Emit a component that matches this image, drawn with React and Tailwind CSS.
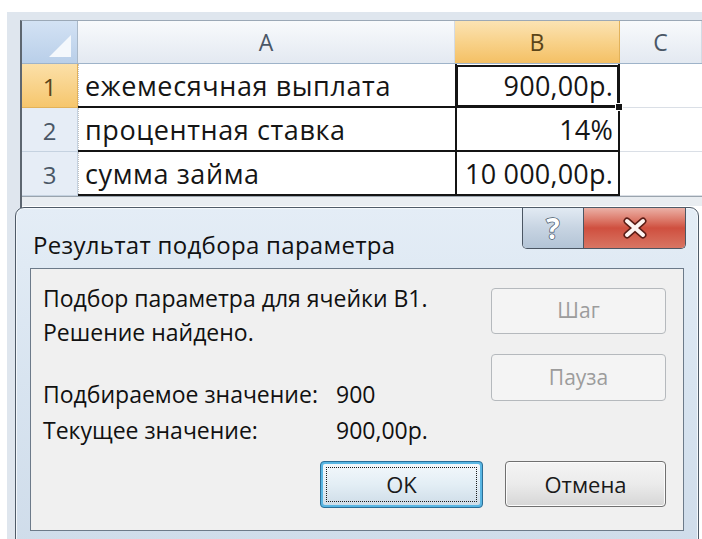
import { useState } from "react";

const cols = [
  { key: "A", width: "w-[377px]" },
  { key: "B", width: "w-[165px]" },
  { key: "C", width: "flex-1" },
];

const rows = [
  { n: "1", label: "ежемесячная выплата", value: "900,00р." },
  { n: "2", label: "процентная ставка", value: "14%" },
  { n: "3", label: "сумма займа", value: "10 000,00р." },
];

function Sheet() {
  return (
    <div className="flex h-full flex-col bg-[#dfe6ee] pl-[13px] pt-[8px]">
      <div className="flex flex-1 flex-col border-l-2 border-t border-l-[#5d6670] border-t-[#9ba8b6] bg-white">
        {/* column headers */}
        <div className="flex h-[43px] border-b border-[#9eb3c9]">
          <div className="relative w-[56px] border-r border-[#a9b8c8] bg-gradient-to-b from-[#d3e2f4] to-[#b9cfe9]">
            <svg className="absolute bottom-[6px] right-[6px]" width="22" height="22" viewBox="0 0 22 22">
              <path d="M22 0 L22 22 L0 22 Z" fill="#f4f8fc" />
            </svg>
          </div>
          {cols.map((c) => (
            <div
              key={c.key}
              className={`${c.width} flex items-center justify-center border-r text-[23px] ${
                c.key === "B"
                  ? "border-[#e2b25a] bg-gradient-to-b from-[#fbe3b3] via-[#f8d28a] to-[#f4c064] text-[#5a4418]"
                  : "border-[#d3dbe5] bg-gradient-to-b from-[#f8fafc] to-[#e3e9f1] text-[#4a5766]"
              }`}
            >
              {c.key}
            </div>
          ))}
        </div>

        {/* data rows */}
        {rows.map((r, i) => (
          <div key={r.n} className="flex h-[44px]">
            <div
              className={`flex w-[56px] items-center justify-center border-b border-r pt-[2px] text-[24px] ${
                i === 0
                  ? "border-[#e2b25a] bg-gradient-to-b from-[#fbe0a8] to-[#f6c66c] text-[#5a4418]"
                  : "border-[#c5d2e0] bg-[#e6edf6] text-[#4a5766]"
              }`}
            >
              {r.n}
            </div>
            <div className="w-[377px] border-b-2 border-[#141414]">
              <div className="flex h-full items-center border-l border-dotted border-[#c4c4c4] pl-[6px] pt-[2px] text-[27px] tracking-[0.6px] text-[#151515]">
                {r.label}
              </div>
            </div>
            <div
              className={`relative flex w-[165px] items-center justify-end border-x-2 border-b-2 border-[#141414] pr-[5px] pt-[2px] text-[27px] tracking-[0.2px] text-[#151515] ${
                i === 0 ? "outline-2 -outline-offset-3 outline-[#141414]" : ""
              }`}
            >
              {r.value}
              {i === 0 && (
                <span className="absolute -bottom-[5px] -right-[5px] z-10 h-[8px] w-[8px] border border-white bg-[#141414]" />
              )}
            </div>
            <div className="flex-1 border-b border-[#dadfe6]" />
          </div>
        ))}
        <div className="h-[10px] border-t border-[#9aa4ae] bg-[#e9edf1]" />
      </div>
    </div>
  );
}

function WinButton({ children, disabled, primary, className = "" }) {
  if (disabled) {
    return (
      <div className={`flex items-center justify-center rounded-[4px] border border-[#b5b9bd] bg-[#f4f4f4] text-[21px] text-[#9c9c9c] ${className}`}>
        {children}
      </div>
    );
  }
  if (primary) {
    return (
      <div className={`rounded-[4px] border border-[#2c6e96] bg-[#59b6e3] p-[2px] ${className}`}>
        <div className="flex h-full items-center justify-center rounded-[2px] bg-gradient-to-b from-[#f3f8fb] via-[#e3eef5] to-[#cfdde8] p-[3px]">
          <div className="flex h-full w-full items-center justify-center border border-dotted border-[#1a1a1a] text-[22px] text-[#1a1a1a]">
            {children}
          </div>
        </div>
      </div>
    );
  }
  return (
    <div className={`flex items-center justify-center rounded-[4px] border border-[#707070] bg-gradient-to-b from-[#f4f4f4] via-[#ebebeb] to-[#d6d6d6] text-[22px] text-[#1a1a1a] shadow-[inset_0_0_0_1px_#fcfcfc] ${className}`}>
      {children}
    </div>
  );
}

function Dialog() {
  return (
    <div className="absolute left-[15px] top-[207px] h-[345px] w-[684px] rounded-t-[9px] border border-[#4f5b68] bg-gradient-to-b from-[#e4edf6] via-[#d8e4f0] to-[#cfdcea] px-[14px] shadow-[inset_0_0_0_1px_#f3f7fb]">
      <div className="flex h-[60px] items-start justify-between">
        <div className="pl-[3px] pt-[19px] text-[24px] tracking-[0.3px] text-[#111]">Результат подбора параметра</div>
        <div className="-mr-[2px] flex h-[41px] overflow-hidden rounded-b-[5px] border border-t-0 border-[#4b5663]">
          <div className="flex w-[61px] items-center justify-center border-r border-[#4b5663] bg-gradient-to-b from-[#e2eaf3] via-[#c7d4e2] to-[#b3c4d6]">
            <span className="text-[28px] font-bold leading-none text-white [-webkit-text-stroke:1.5px_#4a5a6c] [paint-order:stroke_fill]">?</span>
          </div>
          <div className="flex w-[101px] items-center justify-center bg-gradient-to-b from-[#eab0a6] via-[#cf4f3f] to-[#d87563]">
            <svg width="26" height="22" viewBox="0 0 26 22">
              <path d="M5 4 L21 18 M21 4 L5 18" stroke="#5b1d16" strokeWidth="7" strokeLinecap="round" />
              <path d="M5 4 L21 18 M21 4 L5 18" stroke="#fdf4f2" strokeWidth="4" strokeLinecap="round" />
            </svg>
          </div>
        </div>
      </div>

      <div className="flex h-[263px] flex-col border border-[#6c7a89] bg-[#f0f0f0] px-[12px] pt-[12px] pr-[17px]">
        <div className="flex justify-between">
          <div className="text-[23px] text-[#111]">
            <div className="h-[34px] leading-[34px]">Подбор параметра для ячейки B1.</div>
            <div className="h-[34px] leading-[34px]">Решение найдено.</div>
            <div className="mt-[27px] flex h-[36px] leading-[36px]">
              <span className="w-[293px]">Подбираемое значение:</span>
              <span>900</span>
            </div>
            <div className="flex h-[36px] leading-[36px]">
              <span className="w-[293px]">Текущее значение:</span>
              <span>900,00р.</span>
            </div>
          </div>
          <div className="flex flex-col gap-[20px] pt-[7px]">
            <WinButton disabled className="h-[46px] w-[175px]">Шаг</WinButton>
            <WinButton disabled className="h-[47px] w-[175px]">Пауза</WinButton>
          </div>
        </div>
        <div className="mt-[13px] flex justify-end gap-[22px]">
          <WinButton primary className="h-[47px] w-[163px]">OK</WinButton>
          <WinButton className="h-[46px] w-[161px]">Отмена</WinButton>
        </div>
      </div>
    </div>
  );
}

export default function App() {
  const [open] = useState(true);
  return (
    <div className="relative h-[539px] w-[702px] overflow-hidden bg-white pl-[7px] pt-[12px] font-['Open_Sans',sans-serif]">
      <Sheet />
      {open && <Dialog />}
    </div>
  );
}
